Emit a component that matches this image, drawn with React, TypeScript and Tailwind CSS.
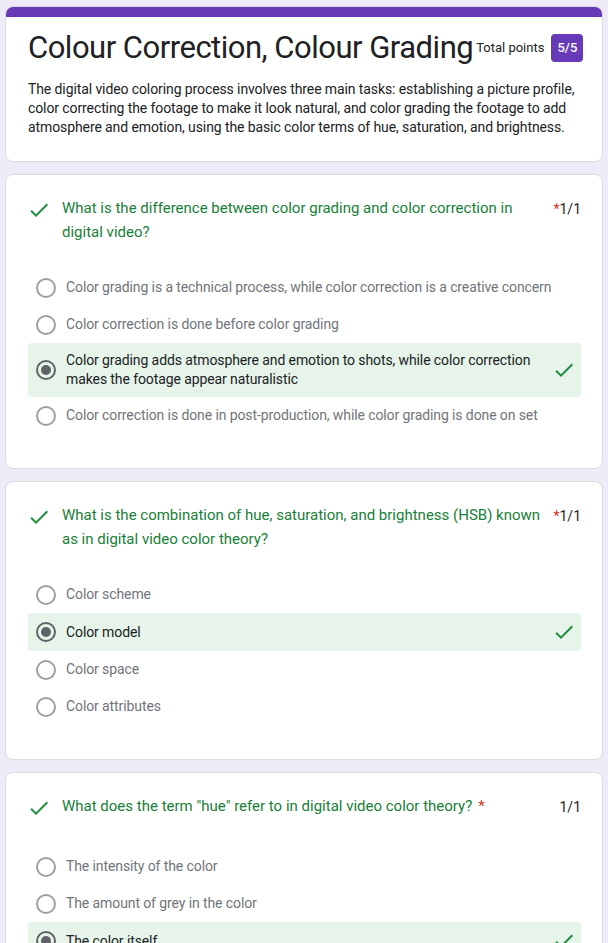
import React from 'react';

interface Question {
    title: string;
    starInline?: boolean;
    options: string[];
    answer: number;
    gap: string;
}

const questions: Question[] = [
    {
        title: 'What is the difference between color grading and color correction in digital video?',
        options: [
            'Color grading is a technical process, while color correction is a creative concern',
            'Color correction is done before color grading',
            'Color grading adds atmosphere and emotion to shots, while color correction makes the footage appear naturalistic',
            'Color correction is done in post-production, while color grading is done on set',
        ],
        answer: 2,
        gap: 'mt-[25px]',
    },
    {
        title: 'What is the combination of hue, saturation, and brightness (HSB) known as in digital video color theory?',
        options: ['Color scheme', 'Color model', 'Color space', 'Color attributes'],
        answer: 1,
        gap: 'mt-[25px]',
    },
    {
        title: 'What does the term "hue" refer to in digital video color theory?',
        starInline: true,
        options: ['The intensity of the color', 'The amount of grey in the color', 'The color itself', 'The brightness of the color'],
        answer: 2,
        gap: 'mt-[28px]',
    },
];

const Check = ({ className }: { className?: string }) => (
    <svg viewBox="0 0 24 24" className={className} fill="currentColor">
        <path d="M9 16.17L4.83 12l-1.42 1.41L9 19 21 7l-1.41-1.41z" />
    </svg>
);

const Radio = ({ checked }: { checked: boolean }) => (
    <div
        className={`flex h-5 w-5 shrink-0 items-center justify-center rounded-full border-2 ${
            checked ? 'border-[#5f6368]' : 'border-[#9aa0a6]'
        }`}
    >
        {checked && <div className="h-[10px] w-[10px] rounded-full bg-[#5f6368]" />}
    </div>
);

const QuestionCard = ({ q }: { q: Question }) => (
    <div className="rounded-lg border border-[#dadce0] bg-white pl-[22px] pr-[21px] pt-[21px] pb-[34px]">
        <div className="flex items-start">
            <Check className="mt-[2px] -ml-[1px] h-6 w-6 shrink-0 text-[#1e8e3e]" />
            <div className="ml-[11px] flex-1 pr-1 text-[15px] leading-6 text-[#188038]">
                {q.title}
                {q.starInline && <span className="ml-[6px] text-[#d93025]">*</span>}
            </div>
            <div className="shrink-0 pt-[1px] text-[14px] leading-6 text-[#202124]">
                {!q.starInline && <span className="text-[#d93025]">*</span>}
                1/1
            </div>
        </div>
        <div className={`${q.gap} flex flex-col`}>
            {q.options.map((opt, i) => {
                const selected = i === q.answer;
                return (
                    <div
                        key={opt}
                        className={`flex items-center rounded px-2 py-[8px] ${
                            selected ? 'min-h-[38px] bg-[#e6f4ea]' : 'min-h-[37px]'
                        }`}
                    >
                        <Radio checked={selected} />
                        <div
                            className={`ml-[10px] flex-1 text-[14px] leading-[19px] tracking-[-0.1px] ${
                                selected ? 'text-[#202124]' : 'text-[#70757a]'
                            }`}
                        >
                            {opt}
                        </div>
                        {selected && (
                            <Check className="-my-[4px] ml-3 -mr-[3px] h-6 w-6 shrink-0 text-[#1e8e3e]" />
                        )}
                    </div>
                );
            })}
        </div>
    </div>
);

export default function App() {
    return (
        <div
            className="min-h-screen bg-[#f0ebf8] px-[5px] pt-[6px] pb-6"
            style={{ fontFamily: 'Roboto, "Liberation Sans", sans-serif' }}
        >
            <div className="flex flex-col gap-3">
                <div className="overflow-hidden rounded-lg border border-[#dadce0] bg-white">
                    <div className="h-[10px] bg-[#673ab7]" />
                    <div className="pl-[22px] pr-[18px] pt-[11px] pb-[24px]">
                        <div className="flex items-center">
                            <h1 className="shrink-0 whitespace-nowrap text-[31px] leading-10 tracking-[-0.5px] text-[#202124]">
                                Colour Correction, Colour Grading
                            </h1>
                            <span className="ml-[3px] whitespace-nowrap text-[13px] text-[#202124]">Total points</span>
                            <span className="ml-[7px] rounded bg-[#673ab7] px-[6px] py-[5px] text-[13px] font-medium leading-[18px] text-white">
                                5/5
                            </span>
                        </div>
                        <p className="mt-[12px] pr-1 text-[14px] leading-[19px] tracking-[-0.1px] text-[#202124]">
                            The digital video coloring process involves three main tasks: establishing a picture profile,
                            color correcting the footage to make it look natural, and color grading the footage to add
                            atmosphere and emotion, using the basic color terms of hue, saturation, and brightness.
                        </p>
                    </div>
                </div>
                {questions.map((q) => (
                    <QuestionCard key={q.title} q={q} />
                ))}
            </div>
        </div>
    );
}
